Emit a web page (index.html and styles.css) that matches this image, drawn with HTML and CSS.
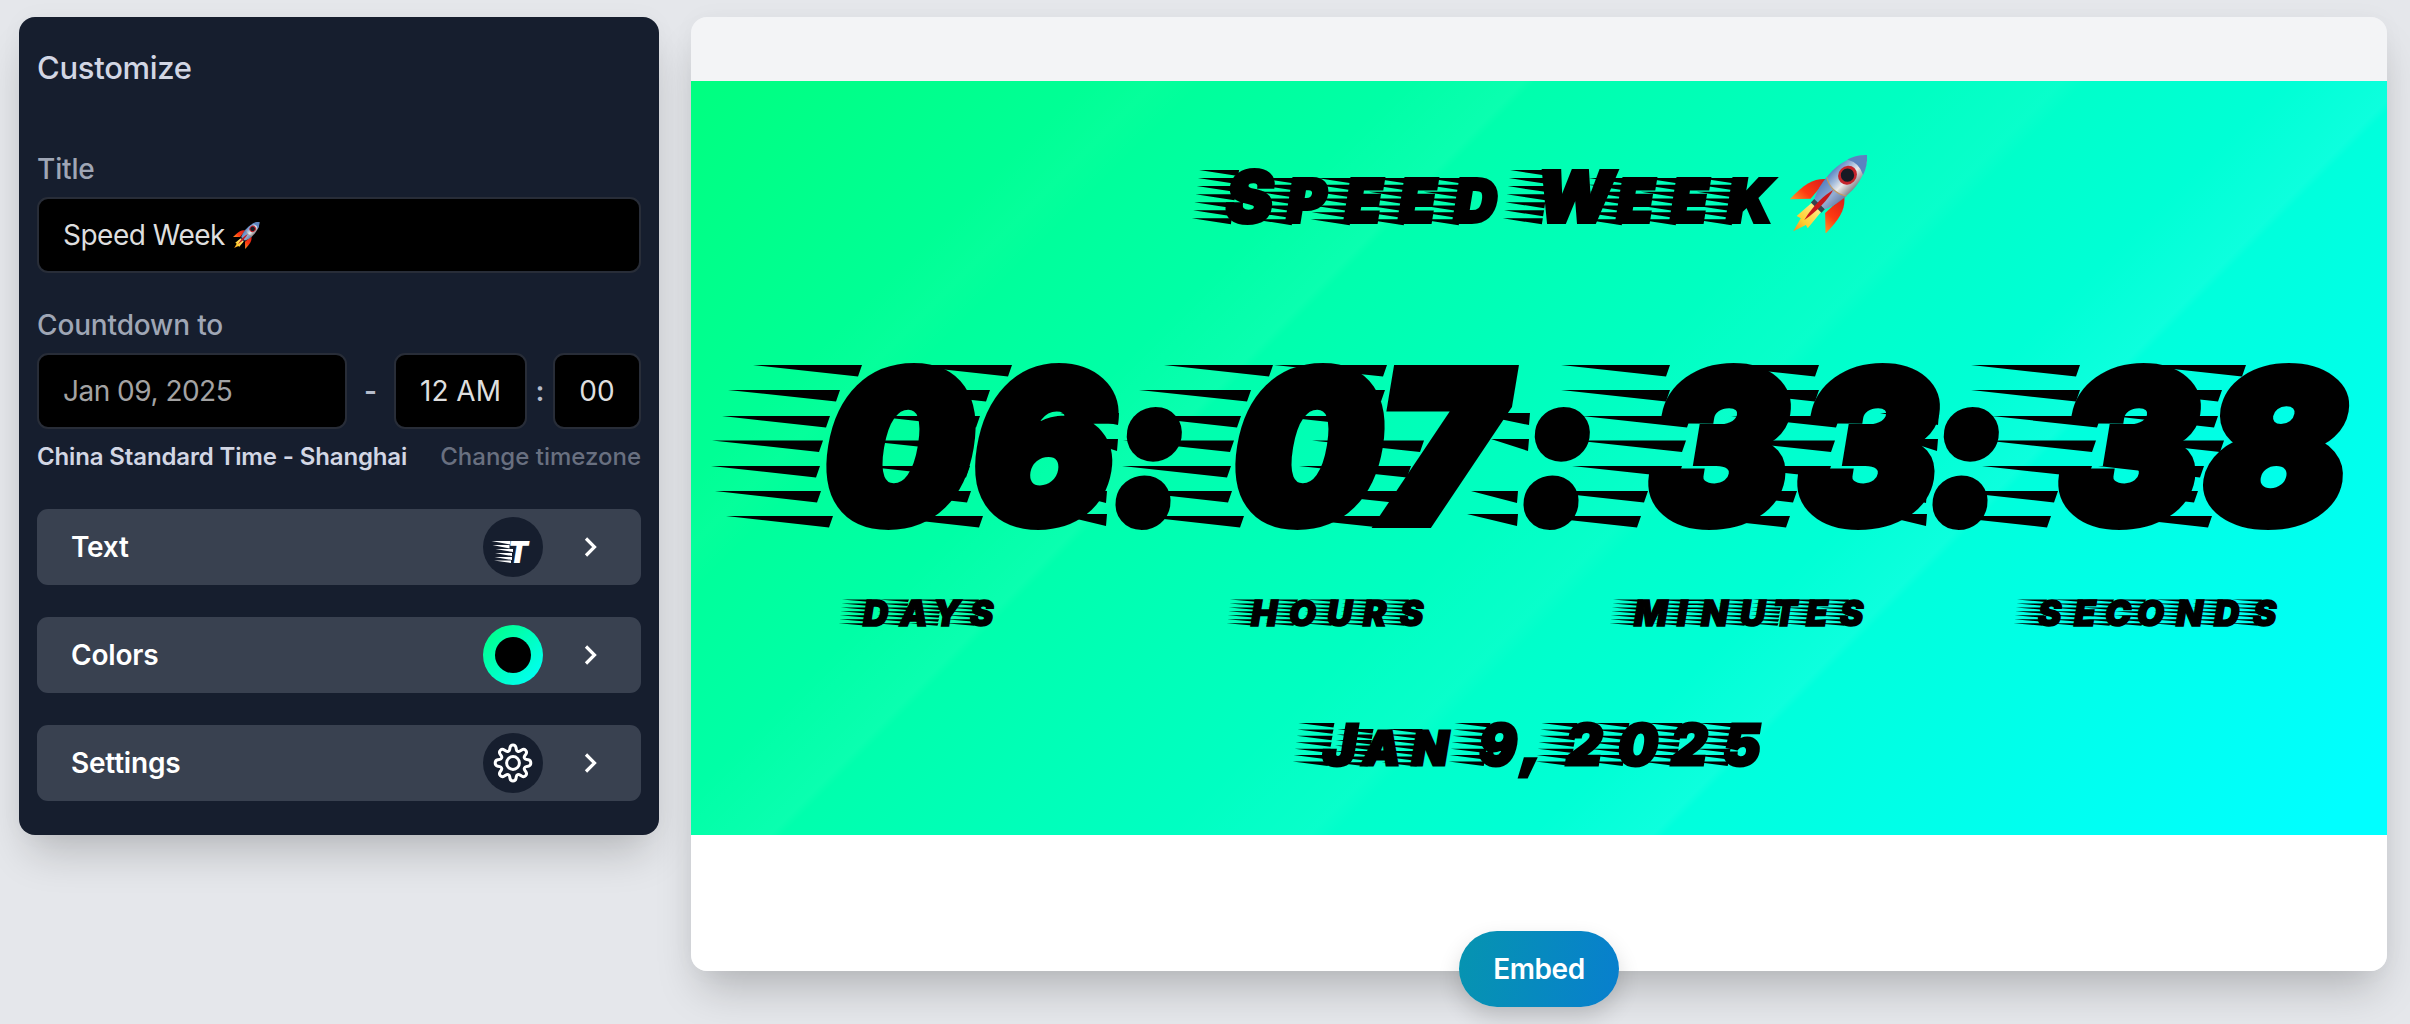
FILE: index.html
```html
<!DOCTYPE html>
<html lang="en">
<head>
<meta charset="utf-8">
<title>Countdown</title>
<link rel="stylesheet" href="styles.css">
</head>
<body>
<svg class="defs" width="0" height="0" aria-hidden="true">
  <defs>
    <linearGradient id="hull" x1="0" x2="1"><stop offset="0" stop-color="#5c86c4"/><stop offset=".35" stop-color="#a9bfdc"/><stop offset=".6" stop-color="#e9e9e9"/><stop offset="1" stop-color="#86868c"/></linearGradient>
    <linearGradient id="fin" x1="0" y1="0" x2="0" y2="1"><stop offset="0" stop-color="#d81c1c"/><stop offset=".6" stop-color="#ff3a10"/><stop offset="1" stop-color="#ff9a2a"/></linearGradient>
    <linearGradient id="flame" x1="0" y1="0" x2="0" y2="1"><stop offset="0" stop-color="#ffe98a"/><stop offset=".6" stop-color="#ffcf30"/><stop offset="1" stop-color="#f58a1e"/></linearGradient>
    <symbol id="rocket" viewBox="0 0 82 80">
      <g transform="translate(80 2) rotate(44) scale(.92 1.22)">
        <path d="M-7 58L-9 76L-4 75L0 87L5 76L9 77L7 58Z" fill="url(#flame)"/>
        <path d="M-13 37C-24 44-27 52-27 70L-11 58Z" fill="url(#fin)"/>
        <path d="M13 37C24 44 27 52 27 70L11 58Z" fill="url(#fin)"/>
        <path d="M0 0C12 9 16 22 15 33C14 43 12 50 8 56H-8C-12 50-14 43-15 33C-16 22-12 9 0 0Z" fill="url(#hull)"/>
        <path d="M0 0C6 4 10 9 12 14Q0 9-12 14C-10 9-6 4 0 0Z" fill="#5b83c0"/>
        <path d="M-15 36Q0 43 15 36C14 44 12 50 8 56H-8C-12 50-14 44-15 36Z" fill="#4f7cc0" opacity=".55"/>
        <path d="M-15 36Q0 43 15 36" fill="none" stroke="#c09a63"/>
        <path d="M-8 56H8V60H-8Z" fill="#39424e"/>
        <path d="M0 40C3 48 4 60 0 74C-4 60-3 48 0 40Z" fill="#c9161b"/>
        <ellipse cy="23" rx="8.500" ry="6.800" fill="#171a24" stroke="#c5232b" stroke-width="2.600"/>
      </g>
    </symbol>
  </defs>
</svg>

<main class="page">
  <section class="panel">
    <h1 class="panel-title">Customize</h1>

    <label class="label">Title</label>
    <div class="input">Speed Week<svg class="emoji"><use href="#rocket"/></svg></div>

    <label class="label label-date">Countdown to</label>
    <div class="date-row">
      <div class="input date">Jan 09, 2025</div>
      <span class="dash">-</span>
      <div class="input hour">12 AM</div>
      <span class="colon">:</span>
      <div class="input minute">00</div>
    </div>
    <div class="zone">
      <span class="zone-name">China Standard Time - Shanghai</span>
      <a class="zone-link">Change timezone</a>
    </div>

    <div class="menu">
      <button class="item">
        <span class="item-name">Text</span>
        <span class="badge"><svg width="60" height="60" viewBox="0 0 60 60" fill="#fff"><path d="M8.500 24H27.500V27.500ZM9.500 28H26.500V31.500ZM12.500 32H30V35ZM12 36H29V39ZM11.500 40H29V43ZM11 43.500H28V46Z"/><text class="badge-letter" x="25" y="45.500" textLength="20" lengthAdjust="spacingAndGlyphs">T</text></svg></span>
        <svg class="chevron" viewBox="0 0 14 22"><path d="M2 2.500L10.500 11L2 19.500"/></svg>
      </button>
      <button class="item">
        <span class="item-name">Colors</span>
        <span class="badge swatch"><span class="swatch-dot"></span></span>
        <svg class="chevron" viewBox="0 0 14 22"><path d="M2 2.500L10.500 11L2 19.500"/></svg>
      </button>
      <button class="item">
        <span class="item-name">Settings</span>
        <span class="badge"><svg class="gear" viewBox="0 0 24 24"><path d="M12.000 3.000c.9 0 1.350.55 1.500 1.300l.2 1.050c.1.500.35.700.700.850c.35.150.700.100 1.100-.15l.850-.600c.700-.450 1.350-.450 1.950.150s.600 1.250.150 1.950l-.6.850c-.25.400-.3.750-.15 1.100c.150.350.350.600.850.700l1.050.200c.750.150 1.300.600 1.300 1.600s-.55 1.450-1.300 1.600l-1.050.200c-.5.100-.7.350-.85.700c-.15.350-.1.700.15 1.100l.6.850c.45.700.45 1.350-.15 1.950s-1.250.600-1.950.150l-.85-.6c-.4-.25-.75-.3-1.100-.15c-.35.150-.6.350-.7.850l-.2 1.050c-.15.750-.6 1.300-1.500 1.300s-1.350-.55-1.500-1.300l-.2-1.050c-.1-.5-.35-.7-.7-.85c-.35-.15-.7-.1-1.100.15l-.85.600c-.7.450-1.350.450-1.950-.15s-.6-1.250-.15-1.950l.6-.85c.25-.4.300-.75.150-1.100c-.15-.35-.35-.6-.85-.7l-1.050-.2c-.75-.15-1.300-.6-1.300-1.600s.55-1.450 1.300-1.600l1.050-.2c.5-.1.700-.35.850-.7c.15-.35.100-.7-.15-1.100l-.6-.85c-.45-.7-.45-1.350.15-1.950s1.250-.6 1.950-.15l.850.600c.4.250.750.300 1.100.15c.35-.15.600-.35.700-.85l.2-1.050c.15-.75.600-1.300 1.500-1.300z"/><circle cx="12" cy="12" r="3.200"/></svg></span>
        <svg class="chevron" viewBox="0 0 14 22"><path d="M2 2.500L10.500 11L2 19.500"/></svg>
      </button>
    </div>
  </section>

  <section class="preview">
    <div class="banner">
      <svg class="row row-title" viewBox="691 145 1696 95">
        <g class="speed" data-length="35" data-cap="54" data-small="46" data-base="224" data-thick="6">
          <text class="title-text" y="222" x="1226 1287 1345 1399 1454">S<tspan class="small">peed</tspan></text>
          <text class="title-text" y="222" x="1537 1617 1671 1727">W<tspan class="small">eek</tspan></text>
        </g>
        <use href="#rocket" x="1787" y="153" width="82" height="80"/>
      </svg>
      <svg class="row row-digits" viewBox="691 350 1696 195">
        <g id="digit-streaks"></g>
        <text class="digits" y="521" x="825 974">06</text>
        <text class="digits" y="521" x="1111">:</text>
        <text class="digits" y="521" x="1234 1379">07</text>
        <text class="digits" y="521" x="1519">:</text>
        <text class="digits" y="521" x="1650 1799">33</text>
        <text class="digits" y="521" x="1928">:</text>
        <text class="digits" y="521" x="2060 2206">38</text>
      </svg>
      <svg class="row row-labels" viewBox="691 590 1696 45">
        <g class="speed" data-length="25" data-cap="26.5" data-base="626" data-thick="2.5">
          <text class="unit" y="625.500" x="863 900 933 970">DAYS</text>
          <text class="unit" y="625.500" x="1251 1289 1327 1363 1400">HOURS</text>
          <text class="unit" y="625.500" x="1634 1677 1701 1740 1773 1806 1840">MINUTES</text>
          <text class="unit" y="625.500" x="2038 2074 2105 2137 2176 2214 2253">SECONDS</text>
        </g>
      </svg>
      <svg class="row row-date" viewBox="691 715 1696 70">
        <g class="speed" data-length="31" data-cap="43" data-small="37" data-base="766" data-thick="4.4">
          <text class="date-text" y="764.500" x="1323 1363 1412">J<tspan class="small">an</tspan></text>
          <text class="date-text" y="764.500" x="1479 1521">9,</text>
          <text class="date-text" y="764.500" x="1566 1618 1671 1723">2025</text>
        </g>
      </svg>
    </div>
    <button class="embed">Embed</button>
  </section>
</main>
<script src="streaks.js"></script>
</body>
</html>
```
FILE: styles.css
```css
* { box-sizing: border-box; }
body {
  margin: 0;
  height: 1024px;
  overflow: hidden;
  background: #e5e7eb;
  font-family: Inter, "Liberation Sans", sans-serif;
  font-size: 28px;
}
button { font: inherit; border: 0; }
.defs { display: block; position: absolute; }
.page {
  display: flex;
  align-items: flex-start;
  gap: 32px;
  padding: 17px 22px 0 19px;
}
.panel {
  width: 640px;
  height: 818px;
  padding: 26px 18px 0;
  border-radius: 16px;
  background: #161e2e;
  box-shadow: 0 26px 44px -10px rgba(0, 0, 0, .2), 0 0 24px rgba(0, 0, 0, .03);
}
.panel-title {
  margin: 0 0 60px;
  font-size: 31px;
  line-height: 50px;
  font-weight: 500;
  letter-spacing: -.3px;
  color: #d2d6e4;
}
.label {
  display: block;
  margin-bottom: 11px;
  line-height: 33px;
  font-weight: 500;
  letter-spacing: -.15px;
  color: #9fa6b5;
}
.label-date { margin-top: 36px; }
.input {
  display: flex;
  align-items: center;
  height: 76px;
  padding: 0 24px;
  border: 2px solid #282d38;
  border-radius: 11px;
  background: #000;
  color: #dedede;
  letter-spacing: -.5px;
  white-space: pre;
}
.emoji { width: 28px; height: 28px; margin-left: 7px; }
.date-row { display: flex; align-items: center; }
.date { width: 310px; color: #a3a3a3; }
.dash { width: 47px; text-align: center; font-weight: 600; color: #b5bccb; }
.hour { width: 133px; padding: 0; justify-content: center; letter-spacing: 0; }
.colon { width: 26px; text-align: center; font-weight: 600; color: #b5bccb; }
.minute { width: 88px; padding: 0; justify-content: center; letter-spacing: 0; }
.zone {
  display: flex;
  justify-content: space-between;
  margin-top: 12px;
  line-height: 32px;
  font-size: 24px;
  font-weight: 500;
}
.zone-name { color: #d2d6e4; font-weight: 600; letter-spacing: -.14px; }
.zone-link { color: #697080; }
.menu { display: grid; gap: 32px; margin-top: 36px; }
.item {
  display: flex;
  align-items: center;
  height: 76px;
  padding: 0 43px 0 34px;
  border-radius: 11px;
  background: #394150;
  color: #fff;
  font-weight: 600;
  letter-spacing: -.2px;
  text-align: left;
}
.item-name { flex: 1; }
.badge {
  display: flex;
  align-items: center;
  justify-content: center;
  width: 60px;
  height: 60px;
  margin-right: 41px;
  border-radius: 50%;
  background: #161e2e;
}
.badge-letter { font: italic 900 30px Inter, sans-serif; }
.swatch { background: linear-gradient(135deg, #00ff80, #00ffff); }
.swatch-dot { width: 36px; height: 36px; border-radius: 50%; background: #000; }
.gear { width: 48px; height: 48px; fill: none; stroke: #fff; stroke-width: 1.5; }
.chevron { width: 14px; height: 22px; fill: none; stroke: #fff; stroke-width: 3.2; }

.preview {
  display: flex;
  flex-direction: column;
  align-items: center;
  width: 1696px;
  height: 954px;
  padding-top: 64px;
  border-radius: 16px;
  background: linear-gradient(#f3f4f6 64px, #fff 64px);
  box-shadow: 0 26px 44px -10px rgba(0, 0, 0, .22), 0 0 24px rgba(0, 0, 0, .03);
}
.banner {
  flex: none;
  width: 100%;
  height: 754px;
  padding-top: 64px;
  background:
    linear-gradient(135deg, transparent 16%, rgba(255, 255, 255, .02) 19%, transparent 21%, transparent 29%, rgba(255, 255, 255, .04) 34%, transparent 34.5%, transparent 50%, rgba(255, 255, 255, .03) 56%, transparent 57%, transparent 65%, rgba(255, 255, 255, .05) 70%, transparent 70.5%),
    linear-gradient(135deg, #00ff80, #00ffff 97%);
}
.row { display: block; width: 1696px; overflow: visible; }
.row-title { height: 95px; }
.row-digits { height: 195px; margin-top: 110px; }
.row-labels { height: 45px; margin-top: 45px; }
.row-date { height: 70px; margin-top: 80px; }
.row text {
  font-family: Inter, sans-serif;
  font-weight: 900;
  font-style: italic;
  text-transform: uppercase;
  stroke: #000;
}
.digits { font-size: 205px; stroke-width: 14; }
.title-text { font-size: 70px; stroke-width: 4; }
.title-text .small { font-size: 59px; }
.unit { font-size: 35px; stroke-width: 1.5; }
.date-text { font-size: 56px; stroke-width: 3; }
.date-text .small { font-size: 47px; }
.embed {
  flex: none;
  width: 160px;
  height: 76px;
  margin-top: 96px;
  border-radius: 38px;
  background: linear-gradient(100deg, #0694b0, #087fce);
  color: #fff;
  font-weight: 600;
  letter-spacing: -.4px;
  box-shadow: 0 10px 22px rgba(0, 0, 0, .16);
}
```
FILE: streaks.js
```js
const NS = "http://www.w3.org/2000/svg";

function wedge(tip, end, y, thick, lean) {
  return `M${tip} ${y}H${end}L${end - lean} ${y + thick}Z`;
}

function addPath(parent, d, before) {
  const path = document.createElementNS(NS, "path");
  path.setAttribute("d", d);
  parent.insertBefore(path, before || null);
}

// Large digits: where each of the seven streaks ends, measured from the digit's left edge.
const rows = [365, 390, 416, 440.5, 466, 491, 516];
const ends = {
  0: [35, 13, 3, -4, -7, -6, 6],
  6: [35, 13, 3, -4, -7, -6, 6],
  7: [3, 1, 0, 40, 27, 13, 0],
  3: [22, 22, 43, 38, 34, 0, -7],
  8: [40, 16, 12, 18, -2, -8, 6]
};
const tips = {
  0: [-74, -99, -105, -115, -116, -112, -101],
  6: [-74, -99, -105, -115, -116, -112, -101],
  7: [-110, -110, -110, -72, -85, -98, -112],
  3: [-87, -87, -66, -72, -76, -109, -116],
  8: [-70, -92, -94, -90, -108, -112, -101]
};
const digits = [["0", 827], ["6", 977], ["0", 1238], ["7", 1384], ["3", 1648], ["3", 1797], ["3", 2058], ["8", 2206]];
let d = "";
for (const [n, x] of digits) {
  rows.forEach((y, i) => { d += wedge(x + tips[n][i], x + ends[n][i], y, 11.5, 4); });
}
for (const x of [1110, 1521, 1930]) {
  for (const [y, tip, end] of [[413, -50, 9], [439, -30, 8], [491, -50, -3], [514, -54, -3]]) {
    d += wedge(x + tip, x + end, y, 12, 1);
  }
}
addPath(document.getElementById("digit-streaks"), d);

// Small lines of text: seven evenly spaced streaks before every letter.
for (const group of document.querySelectorAll(".speed")) {
  const { length, cap, small, base, thick } = group.dataset;
  let line = "";
  for (const text of group.querySelectorAll("text")) {
    const chars = text.textContent;
    text.getAttribute("x").split(" ").forEach((value, k) => {
      if (chars[k] === ",") return;
      const height = Number(/[a-z]/.test(chars[k]) ? small : cap);
      for (let i = 0; i < 7; i++) {
        const y = base - height + i * height / 6.7;
        const end = Number(value) + 5 + (base - y) * 0.15;
        line += wedge(end - length - 5, end, y, Number(thick), 1);
      }
    });
  }
  addPath(group, line, group.firstChild);
}
```
